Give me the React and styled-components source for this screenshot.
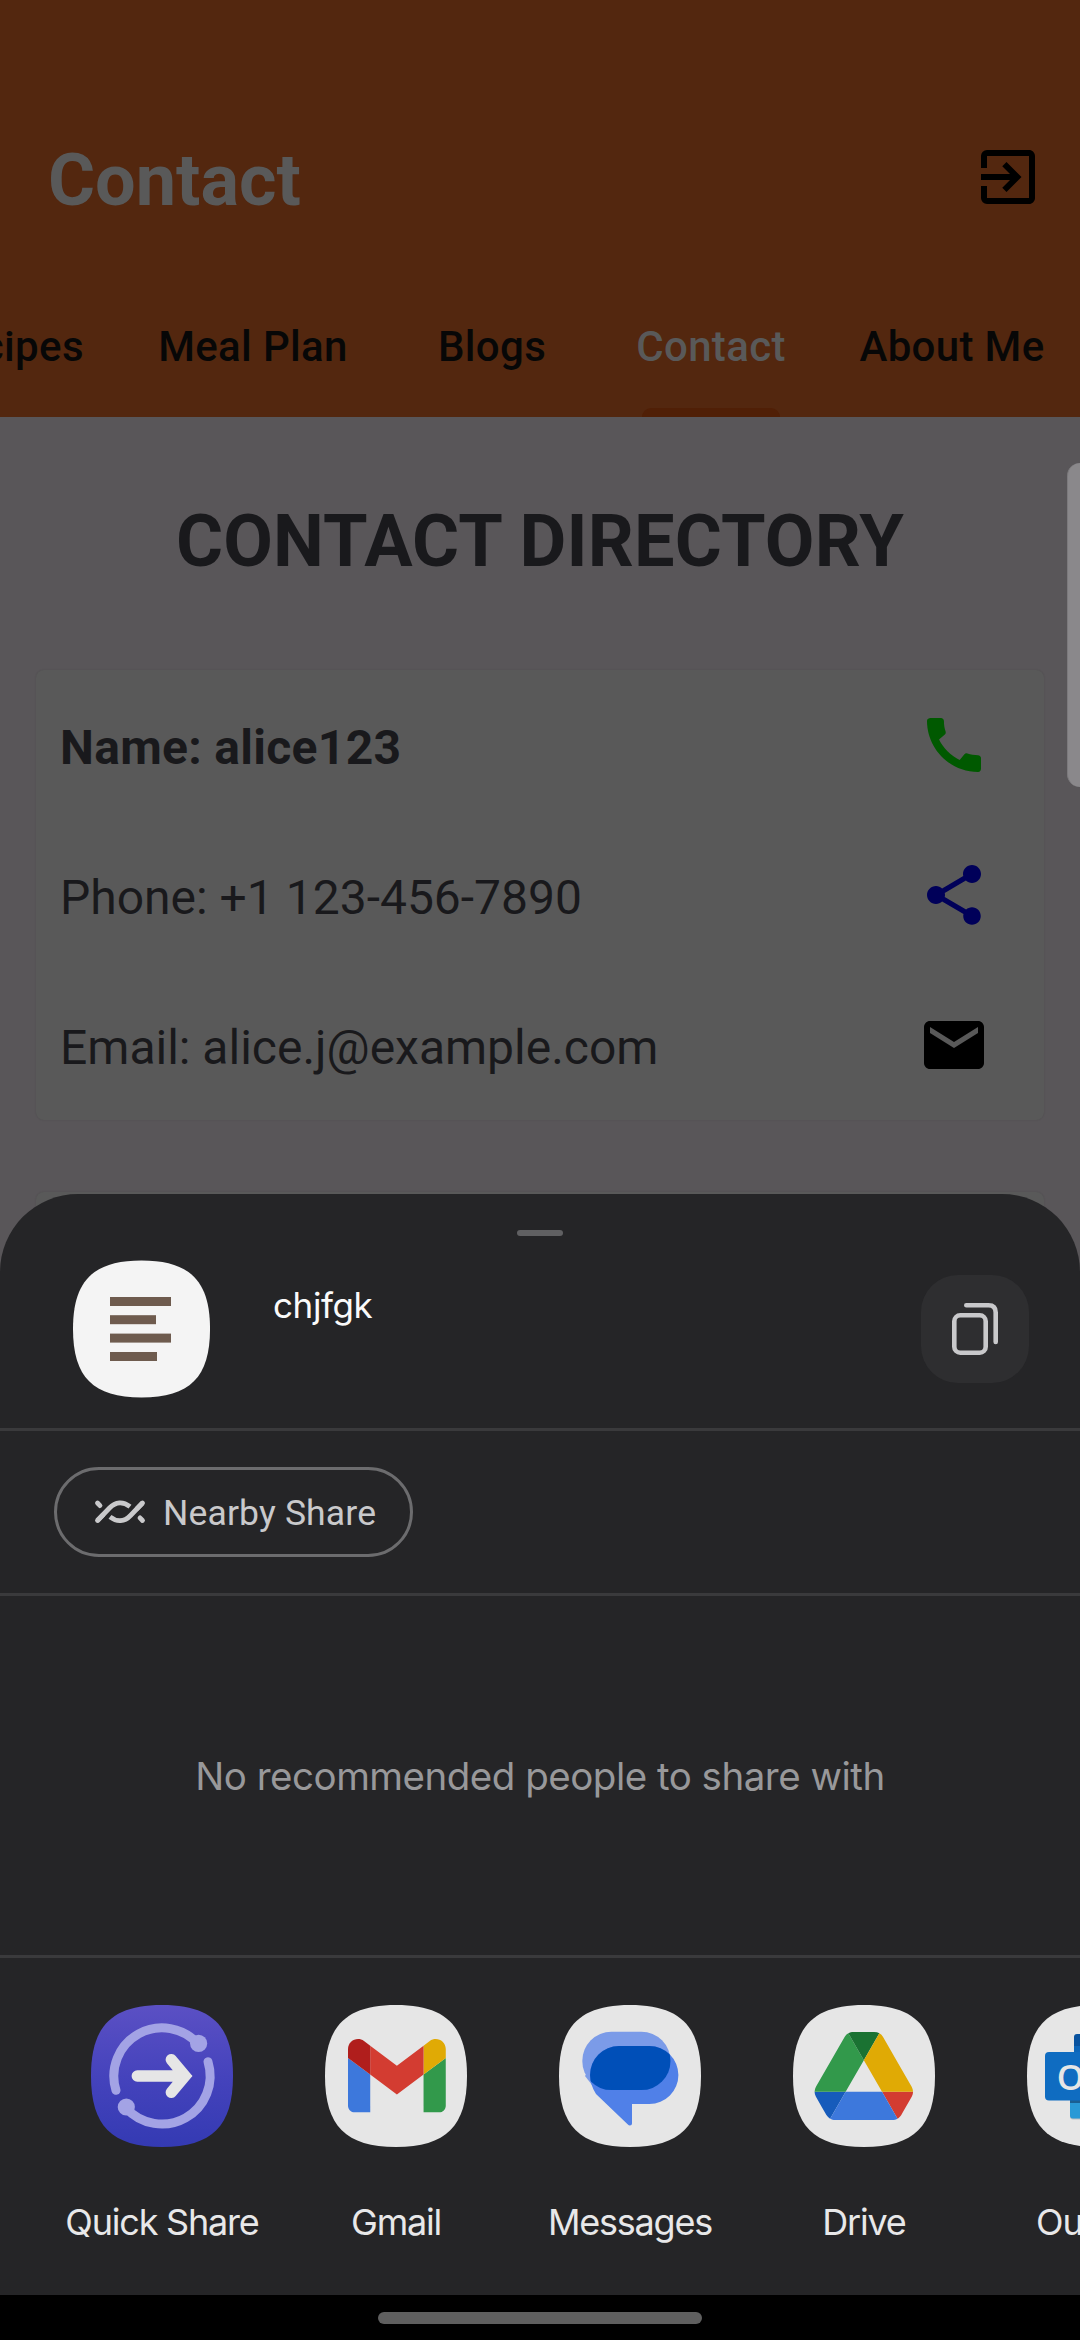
import React from "react";
import styled, { createGlobalStyle } from "styled-components";
import { MdExitToApp, MdCall, MdShare, MdEmail } from "react-icons/md";

const GlobalStyle = createGlobalStyle`
  * { box-sizing: border-box; }
  html, body { margin: 0; padding: 0; background: #595659; }
`;

const Screen = styled.div`
  position: relative;
  width: 1080px;
  height: 2340px;
  overflow: hidden;
  background: #595659;
  font-family: Roboto, "Noto Sans", sans-serif;
`;

/* ---------- App behind the sheet ---------- */

const Header = styled.header`
  display: flex;
  flex-direction: column;
  height: 417px;
  padding-top: 93px;
  background: #53270f;
`;

const AppBar = styled.div`
  display: flex;
  align-items: center;
  justify-content: space-between;
  height: 168px;
  padding: 0 36px 0 48px;
  color: #000;
`;

const AppTitle = styled.h1`
  margin: 0;
  padding-top: 7px;
  font-size: 72px;
  line-height: 84px;
  font-weight: 700;
  color: #595959;
`;

const Tabs = styled.nav`
  display: flex;
  align-items: stretch;
  flex: 1;
  margin-left: -104px;
`;

const Tab = styled.div`
  display: flex;
  flex: none;
  flex-direction: column;
  align-items: center;
  justify-content: space-between;
  width: ${(p) => p.$width}px;
  padding-top: 61px;
  font-size: 42px;
  line-height: 50px;
  font-weight: 500;
  letter-spacing: 0.35px;
  white-space: nowrap;
  color: ${(p) => (p.$active ? "#595959" : "#070707")};
`;

const Indicator = styled.div`
  width: 138px;
  height: 9px;
  border-radius: 9px 9px 0 0;
  background: #501f06;
`;

const Directory = styled.main`
  display: flex;
  flex-direction: column;
  gap: 72px;
  padding: 0 36px;
`;

const DirectoryTitle = styled.h2`
  margin: 0;
  padding-top: 83px;
  height: 181px;
  font-size: 72px;
  line-height: 84px;
  font-weight: 700;
  letter-spacing: 0.2px;
  text-align: center;
  color: #19191c;
`;

const Card = styled.section`
  display: flex;
  flex-direction: column;
  height: 450px;
  border-radius: 8px;
  background: #595959;
  box-shadow: 0 0 2px rgba(0, 0, 0, 0.12);
`;

const CardRow = styled.div`
  display: flex;
  align-items: center;
  justify-content: space-between;
  height: 150px;
  padding: 0 54px 0 24px;
`;

const CardText = styled.span`
  padding-top: 6px;
  font-size: 48px;
  line-height: 56px;
  font-weight: ${(p) => (p.$bold ? 700 : 400)};
  letter-spacing: ${(p) => (p.$bold ? 0.3 : 0)}px;
  color: #19191c;
`;

const CardAction = styled.span`
  display: flex;
  color: ${(p) => p.$color};
`;

const EdgeHandle = styled.div`
  position: absolute;
  top: 463px;
  right: 0;
  width: 13px;
  height: 324px;
  border-radius: 13px 0 0 13px;
  border-left: 1px solid #7c7a7d;
  background: #8a888b;
`;

/* ---------- Share sheet ---------- */

const Sheet = styled.section`
  position: absolute;
  left: 0;
  right: 0;
  bottom: 0;
  display: flex;
  flex-direction: column;
  height: 1146px;
  border-radius: 78px 78px 0 0;
  overflow: hidden;
  background: #252527;
  font-family: Inter, "Noto Sans", sans-serif;
`;

const Preview = styled.div`
  display: flex;
  flex-direction: column;
  height: 237px;
  border-bottom: 3px solid #3a3a3c;
`;

const Grabber = styled.div`
  width: 46px;
  height: 6px;
  margin: 36px auto 0;
  border-radius: 3px;
  background: #606062;
`;

const PreviewRow = styled.div`
  display: flex;
  align-items: flex-start;
  padding: 24px 51px 0 73px;
`;

const PreviewText = styled.span`
  flex: 1;
  padding: 23px 0 0 62px;
  font-size: 35px;
  line-height: 44px;
  letter-spacing: -0.4px;
  color: #fafafa;
`;

const CopyButton = styled.div`
  display: flex;
  align-items: center;
  justify-content: center;
  width: 108px;
  height: 108px;
  margin-top: 15px;
  border-radius: 37px;
  background: #2e2e30;
`;

const ChipRow = styled.div`
  display: flex;
  align-items: center;
  height: 165px;
  padding-left: 54px;
  border-bottom: 3px solid #3a3a3c;
`;

const Chip = styled.div`
  display: flex;
  align-items: center;
  gap: 17px;
  width: 359px;
  height: 90px;
  padding-left: 37px;
  border: 3px solid #6c6c6e;
  border-radius: 45px;
  color: #c9c9cb;
`;

const ChipLabel = styled.span`
  padding-top: 2px;
  font-family: Roboto, "Noto Sans", sans-serif;
  font-size: 35.5px;
  letter-spacing: 0.15px;
`;

const EmptyPeople = styled.div`
  display: flex;
  align-items: center;
  justify-content: center;
  height: 362px;
  border-bottom: 3px solid #3a3a3c;
  font-size: 38.5px;
  letter-spacing: -0.5px;
  color: #98989a;
`;

const AppRow = styled.div`
  display: flex;
  flex: 1;
  padding: 47px 0 0 45px;
`;

const AppTarget = styled.div`
  display: flex;
  flex: none;
  flex-direction: column;
  align-items: center;
  gap: 53px;
  width: 234px;
`;

const AppLabel = styled.span`
  font-size: 36px;
  line-height: 44px;
  letter-spacing: -1.2px;
  white-space: nowrap;
  color: #e8e8e9;
`;

const NavBar = styled.div`
  display: flex;
  justify-content: center;
  height: 45px;
  padding-top: 17px;
  background: #000;
`;

const NavPill = styled.div`
  width: 324px;
  height: 12px;
  border-radius: 6px;
  background: #5f5f5f;
`;

/* ---------- Drawings ---------- */

const SQUIRCLE = "M71 0C121 0 142 21 142 71S121 142 71 142 0 121 0 71 21 0 71 0Z";

function AppIcon({ fill = "#e6e6e6", children }) {
  return (
    <svg width="142" height="142" viewBox="0 0 142 142">
      <path d={SQUIRCLE} fill={fill} />
      {children}
    </svg>
  );
}

function TextFileIcon() {
  return (
    <svg width="138" height="138" viewBox="0 0 138 138">
      <g transform="translate(0 0.5) scale(0.965)">
        <path d={SQUIRCLE} fill="#f4f4f4" />
      </g>
      <g fill="#6e5b4e">
        <rect x="37" y="37" width="61" height="9" />
        <rect x="37" y="55.2" width="46" height="9" />
        <rect x="37" y="73.6" width="61" height="9" />
        <rect x="37" y="92" width="47" height="9" />
      </g>
    </svg>
  );
}

function CopyIcon() {
  return (
    <svg width="48" height="54" viewBox="0 0 48 54" fill="none" stroke="#c9c9cb" strokeWidth="4.6" strokeLinecap="round">
      <rect x="3.3" y="13.3" width="31.4" height="37.4" rx="6" />
      <path d="M15.3 3.3H37.5Q44.7 3.3 44.7 10.5V40" />
    </svg>
  );
}

function NearbyIcon() {
  return (
    <svg width="52" height="26" viewBox="0 0 52 26" fill="none" stroke="#c9c9cb" strokeWidth="4.8" strokeLinecap="round">
      <path d="M3.5 21.5L15.5 9C21.5 2.6 29 2.2 36 7.6" strokeLinecap="butt" />
      <path d="M3.5 21.5L9 15.8" />
      <path d="M48.5 4L36.5 16.5C30.5 22.9 23 23.3 16 17.9" strokeLinecap="butt" />
      <path d="M48.5 4L43 9.7" />
      <path d="M3.5 4L6 6.6M46 18.9L48.5 21.5" />
    </svg>
  );
}

function QuickShareIcon() {
  return (
    <AppIcon fill="url(#quick)">
      <defs>
        <linearGradient id="quick" x1="0" y1="0" x2="0" y2="1">
          <stop offset="0" stopColor="#5b50c4" />
          <stop offset="0.5" stopColor="#4543bc" />
          <stop offset="1" stopColor="#343ab3" />
        </linearGradient>
      </defs>
      <g transform="translate(71 71)" fill="none" strokeLinecap="round">
        <path d="M-46 14.3A48.2 48.2 0 0 1 36.5 -31.5" stroke="#a3a3e5" strokeWidth="9" />
        <path d="M46 -14.3A48.2 48.2 0 0 1 -36 32" stroke="#a3a3e5" strokeWidth="9" />
        <circle cx="36.6" cy="-32.6" r="8.6" fill="#a3a3e5" />
        <circle cx="-35.7" cy="31" r="8.6" fill="#a3a3e5" />
        <path d="M-24.7 0H22M9.3 -16.3L23 0L9.3 16.3" stroke="#e6e6e6" strokeWidth="11.4" />
        <path d="M17 -9L30.3 0L17 9Z" fill="#e6e6e6" />
      </g>
    </AppIcon>
  );
}

function GmailIcon() {
  return (
    <AppIcon>
      <g transform="translate(23 34) scale(1.111) translate(-52 -42)">
        <path fill="#3d78dc" d="M58 108h14V74L52 59v43c0 3.32 2.69 6 6 6" />
        <path fill="#32994b" d="M120 108h14c3.32 0 6-2.69 6-6V59l-20 15" />
        <path fill="#e0aa05" d="M120 48v26l20-15v-8c0-7.42-8.47-11.65-14.4-7.2" />
        <path fill="#d33c31" d="M72 74V48l24 18 24-18v26L96 92" />
        <path fill="#b01e1c" d="M52 51v8l20 15V48l-5.6-4.2c-5.94-4.45-14.4-.22-14.4 7.2" />
      </g>
    </AppIcon>
  );
}

function MessagesIcon() {
  return (
    <AppIcon>
      <defs>
        <clipPath id="backBubble">
          <rect x="23.3" y="26.8" width="88.2" height="58.3" rx="29.1" />
        </clipPath>
      </defs>
      <rect x="23.3" y="26.8" width="88.2" height="58.3" rx="29.1" fill="#7b9be8" />
      <path d="M26 71L33 80V60Z" fill="#7b9be8" />
      <path
        d="M60 41H90.4A29 29 0 0 1 90.4 99H73V118.5Q73 120.5 71 120.5Q69.8 120.5 68.6 119.2L37 89C33 83 31 76 31 70A29 29 0 0 1 60 41Z"
        fill="#5080e8"
      />
      <rect x="31" y="41" width="88.4" height="58" rx="29" fill="#004fb8" clipPath="url(#backBubble)" />
    </AppIcon>
  );
}

function DriveIcon() {
  return (
    <AppIcon>
      <g transform="translate(21.6 27) scale(1.128)">
        <path fill="#165bbb" d="m6.6 66.85 3.85 6.65c.8 1.4 1.95 2.5 3.3 3.3l13.75-23.8h-27.5c0 1.55.4 3.1 1.2 4.5z" />
        <path fill="#32994b" d="m43.65 25-13.75-23.8c-1.35.8-2.5 1.9-3.3 3.3l-25.4 44a9.06 9.06 0 0 0 -1.2 4.5h27.5z" />
        <path fill="#d33c31" d="m73.55 76.8c1.35-.8 2.5-1.9 3.3-3.3l1.6-2.75 7.65-13.25c.8-1.4 1.2-2.95 1.2-4.5h-27.502z" />
        <path fill="#1a7232" d="m43.65 25 13.75-23.8c-1.35-.8-2.9-1.2-4.5-1.2h-18.5c-1.6 0-3.15.45-4.5 1.2z" />
        <path fill="#3d78dc" d="m59.8 53h-32.3l-13.75 23.8c1.35.8 2.9 1.2 4.5 1.2h50.8c1.6 0 3.15-.45 4.5-1.2z" />
        <path fill="#e0aa05" d="m73.4 26.5-12.7-22c-.8-1.4-1.95-2.5-3.3-3.3l-13.75 23.8 16.15 28h27.45c0-1.55-.4-3.1-1.2-4.5z" />
      </g>
    </AppIcon>
  );
}

const LogoLetter = styled.text`
  font-family: "Open Sans", sans-serif;
  font-size: 35px;
  font-weight: 600;
  text-anchor: middle;
  fill: #e6e6e6;
`;

function OutlookIcon() {
  return (
    <AppIcon>
      <rect x="47" y="29" width="70" height="40" rx="3" fill="#09539f" />
      <rect x="47" y="41" width="70" height="30" fill="#0d66b9" />
      <rect x="43" y="85" width="74" height="29.5" rx="3" fill="#b9bcc0" />
      <rect x="43" y="80" width="74" height="33.5" rx="3" fill="#2999d6" />
      <rect x="43" y="95" width="24" height="3" fill="#1a5f92" />
      <rect x="18" y="47" width="48" height="48.5" rx="4" fill="#0f6cc1" />
      <LogoLetter x="43.500" y="84.500">O</LogoLetter>
    </AppIcon>
  );
}

/* ---------- Data ---------- */

const tabs = [
  { label: "Recipes", width: 224 },
  { label: "Meal Plan", width: 266 },
  { label: "Blogs", width: 212 },
  { label: "Contact", width: 226, active: true },
  { label: "About Me", width: 256 },
];

const contactRows = [
  { text: "Name: alice123", bold: true, Icon: MdCall, color: "#005900" },
  { text: "Phone: +1 123-456-7890", Icon: MdShare, color: "#000059" },
  { text: "Email: alice.j@example.com", Icon: MdEmail, color: "#000" },
];

const shareTargets = [
  { label: "Quick Share", Icon: QuickShareIcon },
  { label: "Gmail", Icon: GmailIcon },
  { label: "Messages", Icon: MessagesIcon },
  { label: "Drive", Icon: DriveIcon },
  { label: "Outlook", Icon: OutlookIcon },
];

export default function App() {
  return (
    <Screen>
      <GlobalStyle />
      <Header>
        <AppBar>
          <AppTitle>Contact</AppTitle>
          <MdExitToApp size={72} />
        </AppBar>
        <Tabs>
          {tabs.map((tab) => (
            <Tab key={tab.label} $width={tab.width} $active={tab.active}>
              {tab.label}
              {tab.active && <Indicator />}
            </Tab>
          ))}
        </Tabs>
      </Header>

      <Directory>
        <DirectoryTitle>CONTACT DIRECTORY</DirectoryTitle>
        <Card>
          {contactRows.map(({ text, bold, Icon, color }) => (
            <CardRow key={text}>
              <CardText $bold={bold}>{text}</CardText>
              <CardAction $color={color}>
                <Icon size={72} />
              </CardAction>
            </CardRow>
          ))}
        </Card>
        <Card />
      </Directory>

      <EdgeHandle />

      <Sheet>
        <Preview>
          <Grabber />
          <PreviewRow>
            <TextFileIcon />
            <PreviewText>chjfgk</PreviewText>
            <CopyButton>
              <CopyIcon />
            </CopyButton>
          </PreviewRow>
        </Preview>
        <ChipRow>
          <Chip>
            <NearbyIcon />
            <ChipLabel>Nearby Share</ChipLabel>
          </Chip>
        </ChipRow>
        <EmptyPeople>No recommended people to share with</EmptyPeople>
        <AppRow>
          {shareTargets.map(({ label, Icon }) => (
            <AppTarget key={label}>
              <Icon />
              <AppLabel>{label}</AppLabel>
            </AppTarget>
          ))}
        </AppRow>
        <NavBar>
          <NavPill />
        </NavBar>
      </Sheet>
    </Screen>
  );
}
